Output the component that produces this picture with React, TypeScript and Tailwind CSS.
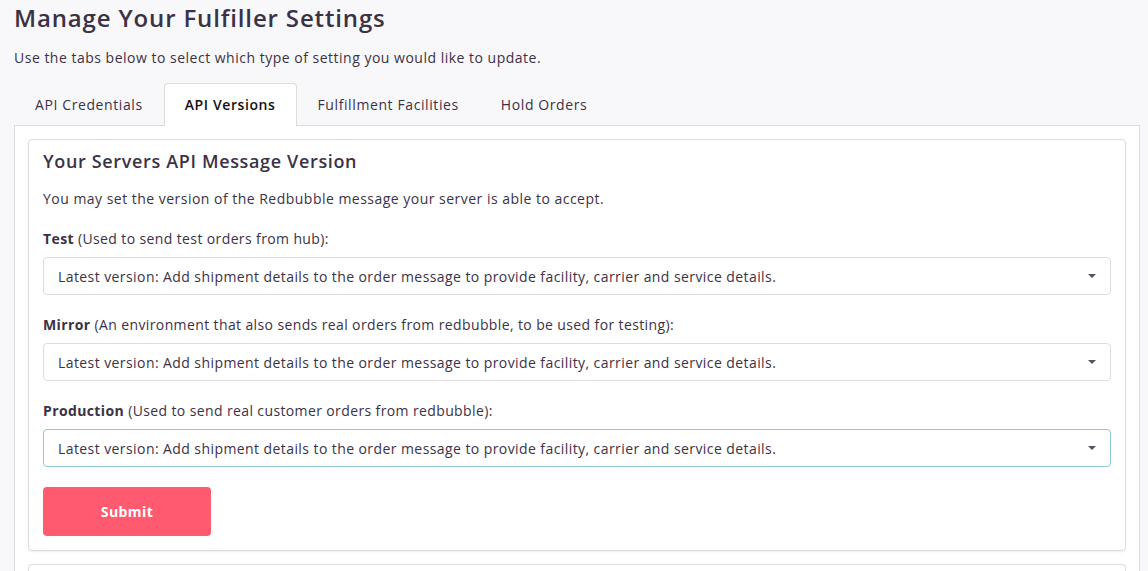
const font = { fontFamily: '"Open Sans", "Liberation Sans", sans-serif' };

const tabs = ["API Credentials", "API Versions", "Fulfillment Facilities", "Hold Orders"];

const versionText =
  "Latest version: Add shipment details to the order message to provide facility, carrier and service details.";

function VersionSelect({ focused }: { focused?: boolean }) {
  return (
    <div
      className={`flex h-[38px] items-center justify-between rounded-[4px] border bg-white pl-[14px] pr-[14px] text-[14px] tracking-[0.42px] text-[#3b3246] ${
        focused ? "border-[#8fc9d6]" : "border-[#dedede]"
      }`}
    >
      <span>{versionText}</span>
      <svg width="8" height="4" viewBox="0 0 8 4" className="fill-[#5a5064]">
        <path d="M0 0h8L4 4z" />
      </svg>
    </div>
  );
}

function Field({ label, hint, focused }: { label: string; hint: string; focused?: boolean }) {
  return (
    <div className="flex flex-col gap-[8px]">
      <p className="text-[14px] leading-[20px] tracking-[0.38px] text-[#3b3246]">
        <span className="font-bold">{label}</span> {hint}
      </p>
      <VersionSelect focused={focused} />
    </div>
  );
}

export default function App() {
  return (
    <div className="h-[571px] overflow-hidden bg-[#f8f8fa] pl-[14px] pr-[8px] text-[#3b3246]" style={font}>
      <h1 className="pt-[3px] text-[24px] font-semibold leading-[30px] tracking-[0.85px] text-[#3b3246]">
        Manage Your Fulfiller Settings
      </h1>
      <p className="mt-[15px] text-[14px] leading-[20px] tracking-[0.5px]">
        Use the tabs below to select which type of setting you would like to update.
      </p>

      <div className="mt-[15px] flex h-[42px]">
        {tabs.map((t) =>
          t === "API Versions" ? (
            <div
              key={t}
              className="relative z-10 -mb-px flex h-[43px] items-center rounded-t-[4px] border border-b-0 border-[#dcdcdc] bg-white px-[20px] pb-px text-[14px] font-semibold tracking-[0.6px] text-[#111]"
            >
              {t}
            </div>
          ) : (
            <div
              key={t}
              className="flex h-[42px] items-center px-[21px] pt-px text-[14px] tracking-[0.6px] text-[#3b3246]"
            >
              {t}
            </div>
          )
        )}
      </div>

      <div className="border border-[#dcdcdc] bg-white px-[13px] pt-[13px]">
        <div className="rounded-[4px] border border-[#dcdcdc] px-[14px] pt-[9px] pb-[14px] shadow-[0_1px_2px_rgba(0,0,0,0.08)]">
          <h2 className="text-[18px] font-semibold leading-[24px] tracking-[0.65px] text-[#3b3246]">
            Your Servers API Message Version
          </h2>
          <p className="mt-[16px] text-[14px] leading-[20px] tracking-[0.48px]">
            You may set the version of the Redbubble message your server is able to accept.
          </p>
          <div className="mt-[20px] flex flex-col gap-[20px]">
            <Field label="Test" hint="(Used to send test orders from hub):" />
            <Field
              label="Mirror"
              hint="(An environment that also sends real orders from redbubble, to be used for testing):"
            />
            <Field label="Production" hint="(Used to send real customer orders from redbubble):" focused />
          </div>
          <button className="mt-[20px] h-[49px] w-[168px] rounded-[4px] bg-[#ff5a70] text-[14px] font-bold tracking-[0.4px] text-white">
            Submit
          </button>
        </div>
        <div className="mt-[13px] h-[20px] rounded-t-[4px] border border-b-0 border-[#dcdcdc]" />
      </div>
    </div>
  );
}
